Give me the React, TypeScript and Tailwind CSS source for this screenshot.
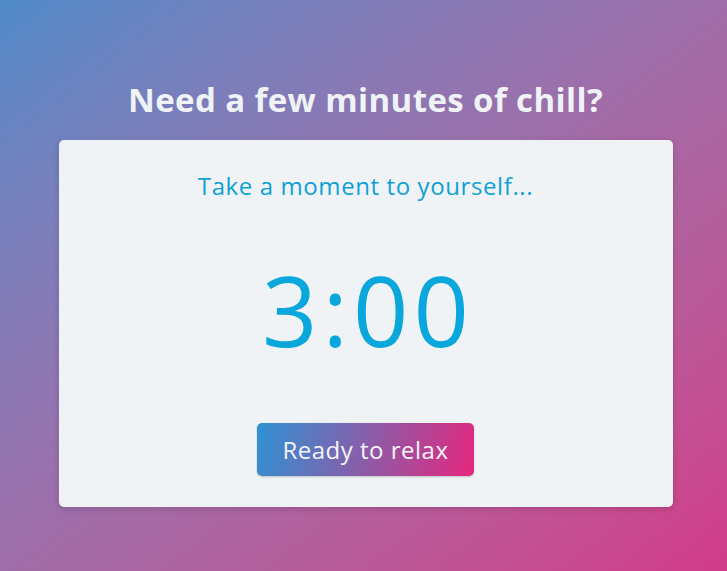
export default function App() {
  return (
    <div
      className="min-h-[571px] w-full bg-gradient-to-br from-[#4f8ac9] to-[#d23a88] flex flex-col items-center pt-[78px]"
      style={{ fontFamily: '"Open Sans", "Liberation Sans", sans-serif' }}
    >
      <h1 className="ml-[4px] text-[33px] leading-[44px] font-bold text-[#eff3f6] tracking-[0.4px]">
        Need a few minutes of chill?
      </h1>

      <div className="ml-[4px] mt-[18px] w-[614px] h-[367px] bg-[#eff3f6] rounded-[5px] shadow-[0_2px_6px_rgba(0,0,0,0.15)] flex flex-col items-center">
        <p className="mt-[30px] text-[24px] leading-[32px] text-[#0fa1d5] tracking-[0.6px]">
          Take a moment to yourself...
        </p>

        <div className="mt-[47px] pl-[5px] text-[97px] leading-[120px] font-normal text-[#09a7dc] tracking-[5px]">
          3:00
        </div>

        <button className="mt-[54px] w-[217px] h-[53px] rounded-[5px] bg-[linear-gradient(105deg,#2f92d4,#e5277e)] text-[#f3f5f8] text-[24px] tracking-[0.5px] shadow-[0_1px_2px_rgba(0,0,0,0.2)]">
          Ready to relax
        </button>
      </div>
    </div>
  )
}
